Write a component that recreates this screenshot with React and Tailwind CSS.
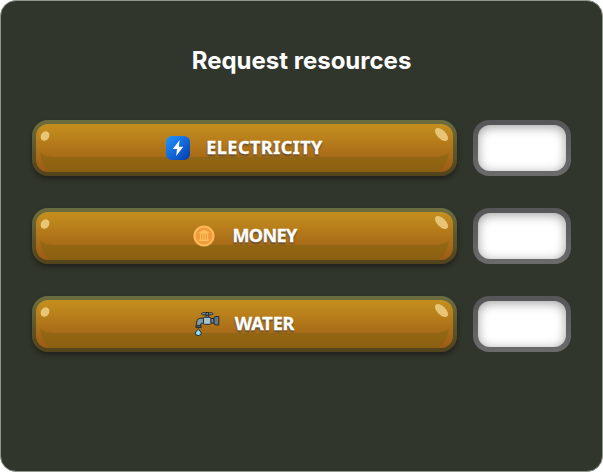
import React from "react";

function BoltIcon() {
  return (
    <svg width="24" height="24" viewBox="0 0 24 24">
      <defs>
        <linearGradient id="bolt" x1="0" y1="0" x2="1" y2="1">
          <stop offset="0" stopColor="#2196ff" />
          <stop offset="0.5" stopColor="#1269dc" />
          <stop offset="1" stopColor="#0638a3" />
        </linearGradient>
      </defs>
      <rect width="24" height="24" rx="6" fill="url(#bolt)" />
      <path d="M13.7 4 L6.8 13 H11 L10.2 20 L17.2 10.8 H12.8 Z" fill="#fff" />
    </svg>
  );
}

function CoinIcon() {
  return (
    <svg width="24" height="24" viewBox="0 0 24 24">
      <circle cx="12" cy="12" r="10.6" fill="#ffba58" />
      <circle cx="12" cy="12" r="8.5" fill="#f19a3e" />
      <path d="M7 8.6 L12 5.8 L17 8.6 V9.5 H7 Z M7 15.6 H17 V17 H7 Z" fill="#ffc05c" />
      <path d="M8.5 9 V16 M10.8 9 V16 M13.2 9 V16 M15.5 9 V16" stroke="#ffc05c" strokeWidth="1" />
    </svg>
  );
}

function TapIcon() {
  return (
    <svg width="26" height="24" viewBox="0 0 26 24" stroke="#252b2d" strokeWidth="1" strokeLinejoin="round">
      <path d="M12 3.5 H14.4 V6 H12 Z" fill="#8fa4ad" />
      <rect x="7.5" y="0.8" width="11.4" height="2" rx="1" fill="#96aab2" />
      <path d="M11.9 0.5 H14.6 V3.3 H11.9 Z" fill="#71858d" />
      <path d="M2.6 15 V11 Q2.6 6.2 7 6.2 H10 V11.2 H8 Q6.6 11.2 6.6 13 V15 Z" fill="#7f9ba7" />
      <path d="M1.9 13.6 H7.2 V15.4 H1.9 Z" fill="#596b72" />
      <rect x="9.5" y="5.3" width="7.5" height="7" rx="0.8" fill="#a7c0ca" />
      <path d="M17 6.5 H20 V11 H17 Z" fill="#78909b" />
      <path d="M20 5.4 L22 4.5 H24.8 V13 H22 L20 12 Z" fill="#657983" />
      <path d="M4.3 16.6 C3.5 18.4 1.3 19.8 1.3 21.2 A3 2.4 0 0 0 7.3 21.2 C7.3 19.8 5.1 18.4 4.3 16.6 Z" fill="#7bd3f2" />
      <path d="M4.2 19.6 V22" stroke="#c4effc" />
    </svg>
  );
}

function Gloss() {
  return (
    <svg className="absolute inset-0" width="417" height="48" viewBox="0 0 417 48">
      <path d="M4 28.5 Q9 33 19 33 H398 Q408 33 413 28.5 Q411.5 42 402 48 H15 Q5.5 42 4 28.5 Z" fill="#7c640f" fillOpacity="0.52" />
      <ellipse cx="9" cy="12" rx="5.1" ry="4.1" transform="rotate(-58 9 12)" fill="#e8c477" />
      <ellipse cx="405.5" cy="10.5" rx="8.2" ry="4.3" transform="rotate(45 405.5 10.5)" fill="#e8c477" />
    </svg>
  );
}

function ResourceRow({ icon, label, textClass, gapClass }) {
  return (
    <div className="flex h-14 gap-4">
      <div className="h-14 w-[425px] rounded-2xl bg-linear-to-b from-[#6c6e40] to-[#52421a] p-1 shadow-[0_3px_5px_rgba(0,0,0,0.4)]">
        <div className="relative h-12 w-full overflow-hidden rounded-xl bg-linear-to-b from-[#c5901f] to-[#9b5a14]">
          <Gloss />
          <div className={"relative flex h-full items-center justify-center " + gapClass}>
            {icon}
            <span
              className={
                "pb-[3px] font-['Noto_Sans','Open_Sans',sans-serif] text-[18px] leading-none font-bold whitespace-nowrap text-white [-webkit-text-stroke:0.3px_white] [text-shadow:0_2px_2px_rgba(60,60,60,0.75)] " +
                textClass
              }
            >
              {label}
            </span>
          </div>
        </div>
      </div>
      <div className="h-14 w-[98px] rounded-2xl bg-linear-to-b from-[#565557] to-[#6b6b6b] p-[5px]">
        <div className="h-full w-full rounded-xl bg-white shadow-[inset_0_2px_11px_rgba(0,0,0,0.38)]" />
      </div>
    </div>
  );
}

export default function App() {
  return (
    <div className="h-[472px] w-[603px] bg-white">
      <div className="h-full w-full rounded-2xl border border-[#8f968c] bg-[#31362c] px-[31px] pt-11">
        <h1 className="text-center font-['Inter',sans-serif] text-[24px] leading-8 font-bold text-white">
          Request resources
        </h1>
        <div className="mt-[43px] flex flex-col gap-8">
          <ResourceRow icon={<BoltIcon />} label="ELECTRICITY" gapClass="gap-4" textClass="tracking-[0.5px]" />
          <ResourceRow icon={<CoinIcon />} label="MONEY" gapClass="gap-4" textClass="tracking-[-0.6px]" />
          <ResourceRow icon={<TapIcon />} label="WATER" gapClass="gap-[15px]" textClass="tracking-[-0.1px] pr-px" />
        </div>
      </div>
    </div>
  );
}
